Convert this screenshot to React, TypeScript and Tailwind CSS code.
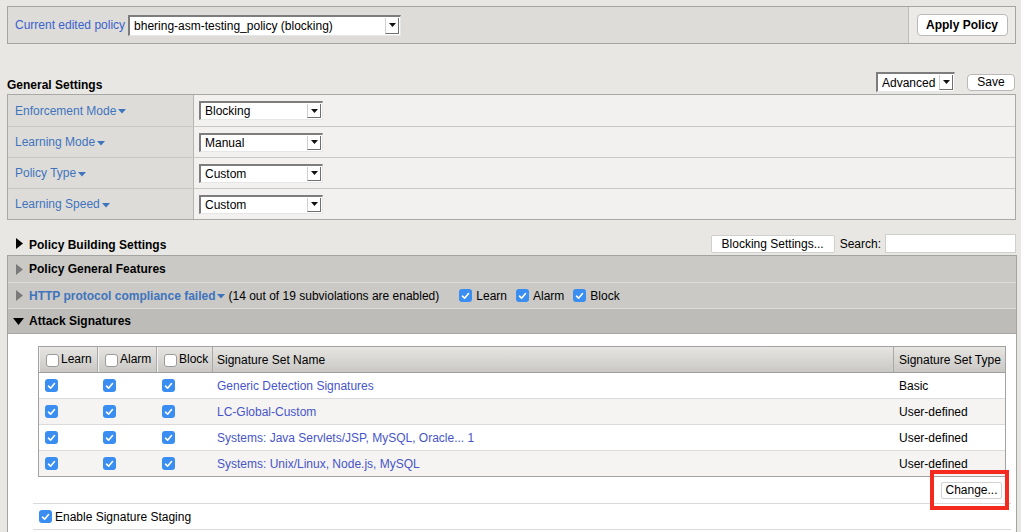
import React from "react";

const Check: React.FC<{ on?: boolean }> = ({ on = true }) =>
  on ? (
    <span className="inline-flex items-center justify-center w-[13px] h-[13px] rounded-[3px] bg-[#3a8ef2] shrink-0">
      <svg width="9" height="8" viewBox="0 0 9 8">
        <path d="M1.5 4.2 L3.6 6.2 L7.5 1.6" fill="none" stroke="white" strokeWidth="1.6" strokeLinecap="round" strokeLinejoin="round" />
      </svg>
    </span>
  ) : (
    <span className="inline-block w-[13px] h-[13px] rounded-[3px] bg-white border border-[#9a9a9a] shrink-0" />
  );

const Caret: React.FC<{ color?: string }> = ({ color = "#3f74bd" }) => (
  <svg width="8" height="5" viewBox="0 0 8 5" className="ml-[2px] mt-[2px]">
    <polygon points="0,0 8,0 4,4.5" fill={color} />
  </svg>
);

const Select: React.FC<{ value: string; className: string }> = ({ value, className }) => (
  <div className={`flex bg-white border-t-2 border-l-2 border-[#7d7d7d] border-r border-b border-r-[#e6e6e6] border-b-[#e6e6e6] ${className}`}>
    <div className="flex-1 flex items-center pl-[4px] text-black whitespace-nowrap overflow-hidden">{value}</div>
    <div className="w-[14px] my-[1px] mr-[1px] flex items-center justify-center bg-white border-l border-[#cfcfcf] border-r border-b border-r-[#6f6f6f] border-b-[#6f6f6f]">
      <svg width="7" height="4" viewBox="0 0 7 4">
        <polygon points="0,0 7,0 3.5,4" fill="#111" />
      </svg>
    </div>
  </div>
);

const Triangle: React.FC<{ dir: "right" | "down"; color: string }> = ({ dir, color }) =>
  dir === "right" ? (
    <svg width="7" height="11" viewBox="0 0 7 11" className="shrink-0">
      <polygon points="0,0 7,5.5 0,11" fill={color} />
    </svg>
  ) : (
    <svg width="11" height="7" viewBox="0 0 11 7" className="shrink-0">
      <polygon points="0,0 11,0 5.5,7" fill={color} />
    </svg>
  );

const settings = [
  { label: "Enforcement Mode", value: "Blocking" },
  { label: "Learning Mode", value: "Manual" },
  { label: "Policy Type", value: "Custom" },
  { label: "Learning Speed", value: "Custom" },
];

const sigSets = [
  { name: "Generic Detection Signatures", type: "Basic" },
  { name: "LC-Global-Custom", type: "User-defined" },
  { name: "Systems: Java Servlets/JSP, MySQL, Oracle... 1", type: "User-defined" },
  { name: "Systems: Unix/Linux, Node.js, MySQL", type: "User-defined" },
];

export default function App() {
  return (
    <div className="w-[1021px] h-[532px] overflow-hidden bg-[#e8e7e3] font-['Liberation_Sans',Arial,sans-serif] text-[12px] text-black">
      {/* current policy bar */}
      <div className="pt-[6px] pl-[7px] pr-[5px]">
        <div className="h-[38px] flex border border-[#a4a4a2]">
          <div className="flex-1 flex items-center pl-[7px] bg-[#dddcd9]">
            <span className="text-[#3b62cc] mr-[3px]">Current edited policy</span>
            <Select value="bhering-asm-testing_policy (blocking)" className="w-[273px] h-[21px]" />
          </div>
          <div className="w-[107px] flex items-center justify-center bg-[#ebeae7] border-l border-[#bdbdbb]">
            <button className="w-[91px] h-[22px] -mt-[1px] rounded-[4px] bg-white border border-[#b9b9b9] font-bold">Apply Policy</button>
          </div>
        </div>
      </div>

      {/* general settings header */}
      <div className="mt-[27px] pl-[7px] pr-[6px] h-[23px] flex items-end">
        <span className="font-bold">General Settings</span>
        <div className="ml-auto flex items-center gap-[12px] mb-[2px]">
          <Select value="Advanced" className="w-[79px] h-[20px]" />
          <button className="w-[48px] h-[17px] rounded-[4px] bg-white border border-[#b9b9b9] leading-none">Save</button>
        </div>
      </div>

      <div className="pl-[7px] pr-[5px]">
        <div className="border border-[#a8a8a6]">
          {settings.map((s, i) => (
            <div key={s.label} className={`flex h-[31px] ${i > 0 ? "border-t border-[#c9c8c5]" : ""}`}>
              <div className="w-[186px] flex items-center pl-[7px] bg-[#dddcd9] border-r border-[#b5b4b2] text-[#3f74bd]">
                {s.label}
                <Caret />
              </div>
              <div className="flex-1 flex items-center pl-[5px] bg-[#f2f1ef]">
                <Select value={s.value} className="w-[124px] h-[19px]" />
              </div>
            </div>
          ))}
        </div>
      </div>

      {/* policy building settings */}
      <div className="mt-[13px] pl-[16px] pr-[5px] h-[21px] flex items-center">
        <Triangle dir="right" color="#000" />
        <span className="font-bold ml-[6px] mt-[2px]">Policy Building Settings</span>
        <div className="ml-auto flex items-center">
          <button className="w-[124px] h-[18px] bg-white border border-[#cfcfcf] rounded-[2px] leading-none">Blocking Settings...</button>
          <span className="ml-[5px] mr-[4px]">Search:</span>
          <div className="w-[131px] h-[19px] bg-white border border-[#cfcfcf]" />
        </div>
      </div>

      {/* violations panel */}
      <div className="mt-[1px] ml-[7px] mr-[4px] border-l border-r border-t border-[#a3a3a1] bg-white h-[300px]">
        <div className="h-[27px] flex items-center pl-[8px] bg-[#cac9c6] border-b border-[#dddcd9]">
          <Triangle dir="right" color="#7a7a7a" />
          <span className="font-bold ml-[6px]">Policy General Features</span>
        </div>
        <div className="h-[26px] flex items-center pl-[8px] bg-[#cac9c6] border-b border-[#dddcd9]">
          <Triangle dir="right" color="#7a7a7a" />
          <span className="font-bold ml-[6px] text-[#3f74bd]">HTTP protocol compliance failed</span>
          <Caret />
          <span className="ml-[3px]">(14 out of 19 subviolations are enabled)</span>
          <div className="flex items-center ml-[20px] gap-[1px]">
            <Check /><span className="ml-[3px] mr-[8px]">Learn</span>
            <Check /><span className="ml-[3px] mr-[8px]">Alarm</span>
            <Check /><span className="ml-[3px]">Block</span>
          </div>
        </div>
        <div className="h-[25px] flex items-center pl-[5px] bg-[#bdbcb9] border-b border-[#a8a7a4]">
          <Triangle dir="down" color="#000" />
          <span className="font-bold ml-[5px]">Attack Signatures</span>
        </div>

        <div className="pt-[12px] pl-[30px] pr-[10px]">
          <div className="border border-[#a2a2a2]">
            <div className="h-[26px] flex bg-gradient-to-b from-[#e6e5e2] to-[#c9c8c5] border-b border-[#9f9f9f]">
              {["Learn", "Alarm", "Block"].map((h, i) => (
                <div key={h} className={`${i === 2 ? "w-[56px]" : "w-[59px]"} flex items-center pl-[6px] border-r border-[#a9a9a9] border-l border-l-[#f3f3f3]`}>
                  <span className="mt-[6px]"><Check on={false} /></span>
                  <span className="ml-[2px] -mt-[2px]">{h}</span>
                </div>
              ))}
              <div className="flex-1 flex items-center pl-[4px] border-r border-[#a9a9a9]">Signature Set Name</div>
              <div className="w-[111px] flex items-center pl-[5px]">Signature Set Type</div>
            </div>
            {sigSets.map((r, i) => (
              <div key={r.name} className={`${i === 0 ? "h-[25px]" : "h-[26px] border-t border-[#dcdbd9]"} flex items-center ${i % 2 ? "bg-[#f5f4f2]" : "bg-white"}`}>
                <div className="w-[59px] pl-[6px] flex"><Check /></div>
                <div className="w-[59px] pl-[5px] flex"><Check /></div>
                <div className="w-[56px] pl-[5px] flex"><Check /></div>
                <div className="flex-1 pl-[4px] text-[#4755c9]">{r.name}</div>
                <div className="w-[111px] pl-[5px]">{r.type}</div>
              </div>
            ))}
          </div>
        </div>

        <div className="pr-[14px] pt-[4px] flex justify-end">
          <div className="relative">
            <button className="w-[61px] h-[17px] bg-white border border-[#d2d2d2] rounded-[2px] leading-none">Change...</button>
            <div className="absolute -left-[11px] -top-[11px] w-[79px] h-[40px] border-[4px] border-[#f42a1f]" />
          </div>
        </div>

        <div className="mt-[4px] ml-[25px] mr-[5px] border-t border-[#d9d9d7] h-[27px] flex items-center pl-[6px] border-b">
          <Check />
          <span className="ml-[3px]">Enable Signature Staging</span>
        </div>
      </div>
    </div>
  );
}
